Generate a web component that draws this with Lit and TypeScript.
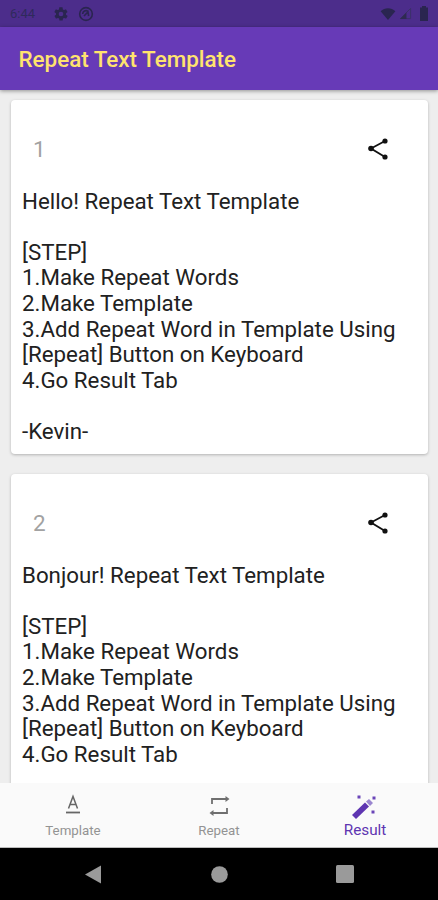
import { LitElement, html, css, svg } from "lit";
import { customElement } from "lit/decorators.js";

const cards = [
  { n: "1", hi: "Hello! Repeat Text Template" },
  { n: "2", hi: "Bonjour! Repeat Text Template" },
];

@customElement("app-root")
export class AppRoot extends LitElement {
  static styles = css`
    :host { display: flex; flex-direction: column; width: 438px; height: 900px; overflow: hidden; background: #eeeeee; font-family: Roboto, "Noto Sans", sans-serif; }
    .status { height: 27px; flex: none; background: #4c2d8b; display: flex; align-items: center; padding: 0 9px 0 10px; box-sizing: border-box; }
    .time { font-size: 13px; width: 34px; color: #2f2a5c; }
    .status svg { display: block; }
    .st-left { display: flex; align-items: center; gap: 9px; }
    .st-right { margin-left: auto; display: flex; align-items: center; gap: 3px; }
    .appbar { height: 63px; flex: none; background: #673ab7; display: flex; align-items: center; padding: 0 18.5px; box-shadow: 0 1px 4px rgba(0,0,0,.4); position: relative; z-index: 1; box-sizing: border-box; }
    .title { font-size: 22.4px; font-weight: 500; color: #ffe36e; }
    .list { flex: 1; min-height: 0; overflow: hidden; padding: 10px 10px 0 11px; display: flex; flex-direction: column; gap: 20px; }
    .card { flex: none; background: #fff; border-radius: 4px; box-shadow: 0 1px 3px rgba(0,0,0,.25); padding: 24px 12px 0 11px; height: 354px; box-sizing: border-box; }
    .head { display: flex; align-items: center; justify-content: space-between; height: 50px; }
    .num { font-size: 22.5px; color: #a2a2a2; padding-left: 11px; }
    .share { width: 28px; height: 28px; margin-right: 24px; color: #111; }
    .body { margin-top: 14.5px; font-size: 22.3px; line-height: 25.65px; color: #212121; white-space: pre-line; }
    .nav { height: 64px; flex: none; background: #fafafa; display: grid; grid-template-columns: repeat(3, 1fr); position: relative; z-index: 1; }
    .tab { display: flex; flex-direction: column; align-items: center; padding-top: 10px; color: #939393; font-size: 13.3px; }
    .tab svg { width: 28px; height: 28px; display: block; }
    .tab span { margin-top: 2px; line-height: 16px; }
    .tab.on { color: #5e35b1; font-size: 15.3px; }
    .tab.on span { margin-top: 1px; }
    .sys { height: 53px; flex: none; background: #000; display: flex; align-items: center; justify-content: center; border-top: 1px solid #bbb; box-sizing: border-box; }
    .sys div { width: 126px; display: flex; justify-content: center; }
    .sys svg { display: block; fill: #9a9a9a; }
  `;

  render() {
    const share = svg`<g fill="currentColor" stroke="currentColor"><path fill="none" stroke-width="1.800" d="M21 6L7 13.500 21 22"/><circle cx="21" cy="6" r="2.600" stroke="none"/><circle cx="7" cy="13.500" r="2.800" stroke="none"/><circle cx="21" cy="22" r="2.600" stroke="none"/></g>`;
    return html`
      <div class="status">
        <div class="st-left">
          <span class="time">6:44</span>
          <svg width="16" height="16" viewBox="0 0 24 24"><path fill="#2a2550" d="M19.4 13c0-.3.1-.6.1-1s0-.7-.1-1l2.1-1.6c.2-.2.2-.4.1-.6l-2-3.5c-.1-.2-.4-.3-.6-.2l-2.5 1c-.5-.4-1.1-.7-1.7-1l-.4-2.6c0-.3-.2-.5-.5-.5h-4c-.3 0-.5.2-.5.4l-.4 2.7c-.6.2-1.1.6-1.7 1l-2.5-1c-.2-.1-.5 0-.6.2l-2 3.5c-.1.2 0 .4.1.6L4.6 11c0 .3-.1.6-.1 1s0 .7.1 1l-2.1 1.6c-.2.2-.2.4-.1.6l2 3.5c.1.2.4.3.6.2l2.5-1c.5.4 1.1.7 1.7 1l.4 2.6c0 .2.2.4.5.4h4c.3 0 .5-.2.5-.4l.4-2.6c.6-.3 1.2-.6 1.7-1l2.5 1c.2.1.5 0 .6-.2l2-3.500c.1-.2.1-.4-.1-.6L19.4 13zM12 15.5a3.5 3.5 0 1 1 0-7 3.5 3.5 0 0 1 0 7z"/></svg>
          <svg width="16" height="16" viewBox="0 0 24 24" fill="none" stroke="#2a2550" stroke-width="2.400"><circle cx="12" cy="12" r="9.500"/><path d="M7 12a5 5 0 0 1 8-4M9 15l6-6 1 6"/></svg>
        </div>
        <div class="st-right">
          <svg width="16" height="12" viewBox="0 0 16 13"><path fill="#2a2550" d="M0 3.500C4.500 -.8 11.500 -.8 16 3.500L8 13z"/></svg>
          <svg width="13" height="13" viewBox="0 0 14 14"><path fill="none" stroke="#3a3266" d="M1.500 12.500L12.500 1.500V12.500z"/><path fill="#2f2a52" d="M1 13L8 6V13z"/></svg>
          <svg width="10" height="15" viewBox="0 0 10 15" style="margin-left:4px"><path fill="#2a2550" d="M3 0h4v1.500h2V15H1V1.500h2z"/></svg>
        </div>
      </div>
      <div class="appbar"><span class="title">Repeat Text Template</span></div>
      <div class="list">
        ${cards.map(c => html`
          <div class="card">
            <div class="head">
              <span class="num">${c.n}</span>
              <svg class="share" viewBox="0 0 28 28">${share}</svg>
            </div>
            <div class="body">${c.hi}

[STEP]
1.Make Repeat Words
2.Make Template
3.Add Repeat Word in Template Using
[Repeat] Button on Keyboard
4.Go Result Tab

-Kevin-</div>
          </div>`)}
      </div>
      <div class="nav">
        <div class="tab">
          <svg viewBox="0 0 28 28"><path fill="none" stroke="#666" stroke-width="1.500" d="M9.500 15.500L14 3.500 18.500 15.500M11 11.500h6"/><path stroke="#666" stroke-width="1.800" d="M7 19.500h14"/></svg>
          <span>Template</span>
        </div>
        <div class="tab">
          <svg viewBox="0 0 28 28"><path fill="none" stroke="#6f6f6f" stroke-width="1.800" d="M7 11V6h15M22 15v5H8"/><path fill="#6f6f6f" d="M20.500 3l4 3-4 3zM8.500 17l-4 3 4 3z"/></svg>
          <span>Repeat</span>
        </div>
        <div class="tab on">
          <svg viewBox="0 0 28 28"><path fill="#5e35b1" d="M14 9.500l4 4L5 26l-4-4z"/><path fill="#9a86cf" d="M15 8.500l3-2.500 4 4-3 3z"/><path fill="#6a45b8" d="M6.500 2.500h3v3h-3zM21.500 3.500h3v3h-3zM20.500 17.500h3v3h-3z"/></svg>
          <span>Result</span>
        </div>
      </div>
      <div class="sys">
        <div><svg width="18" height="19" viewBox="0 0 18 19"><path d="M17 .5v18L1 9.500z"/></svg></div>
        <div><svg width="17" height="17" viewBox="0 0 18 18"><circle cx="9" cy="9" r="8.800"/></svg></div>
        <div><svg width="18" height="18" viewBox="0 0 18 18"><rect width="18" height="18" rx="1.500"/></svg></div>
      </div>
    `;
  }
}
